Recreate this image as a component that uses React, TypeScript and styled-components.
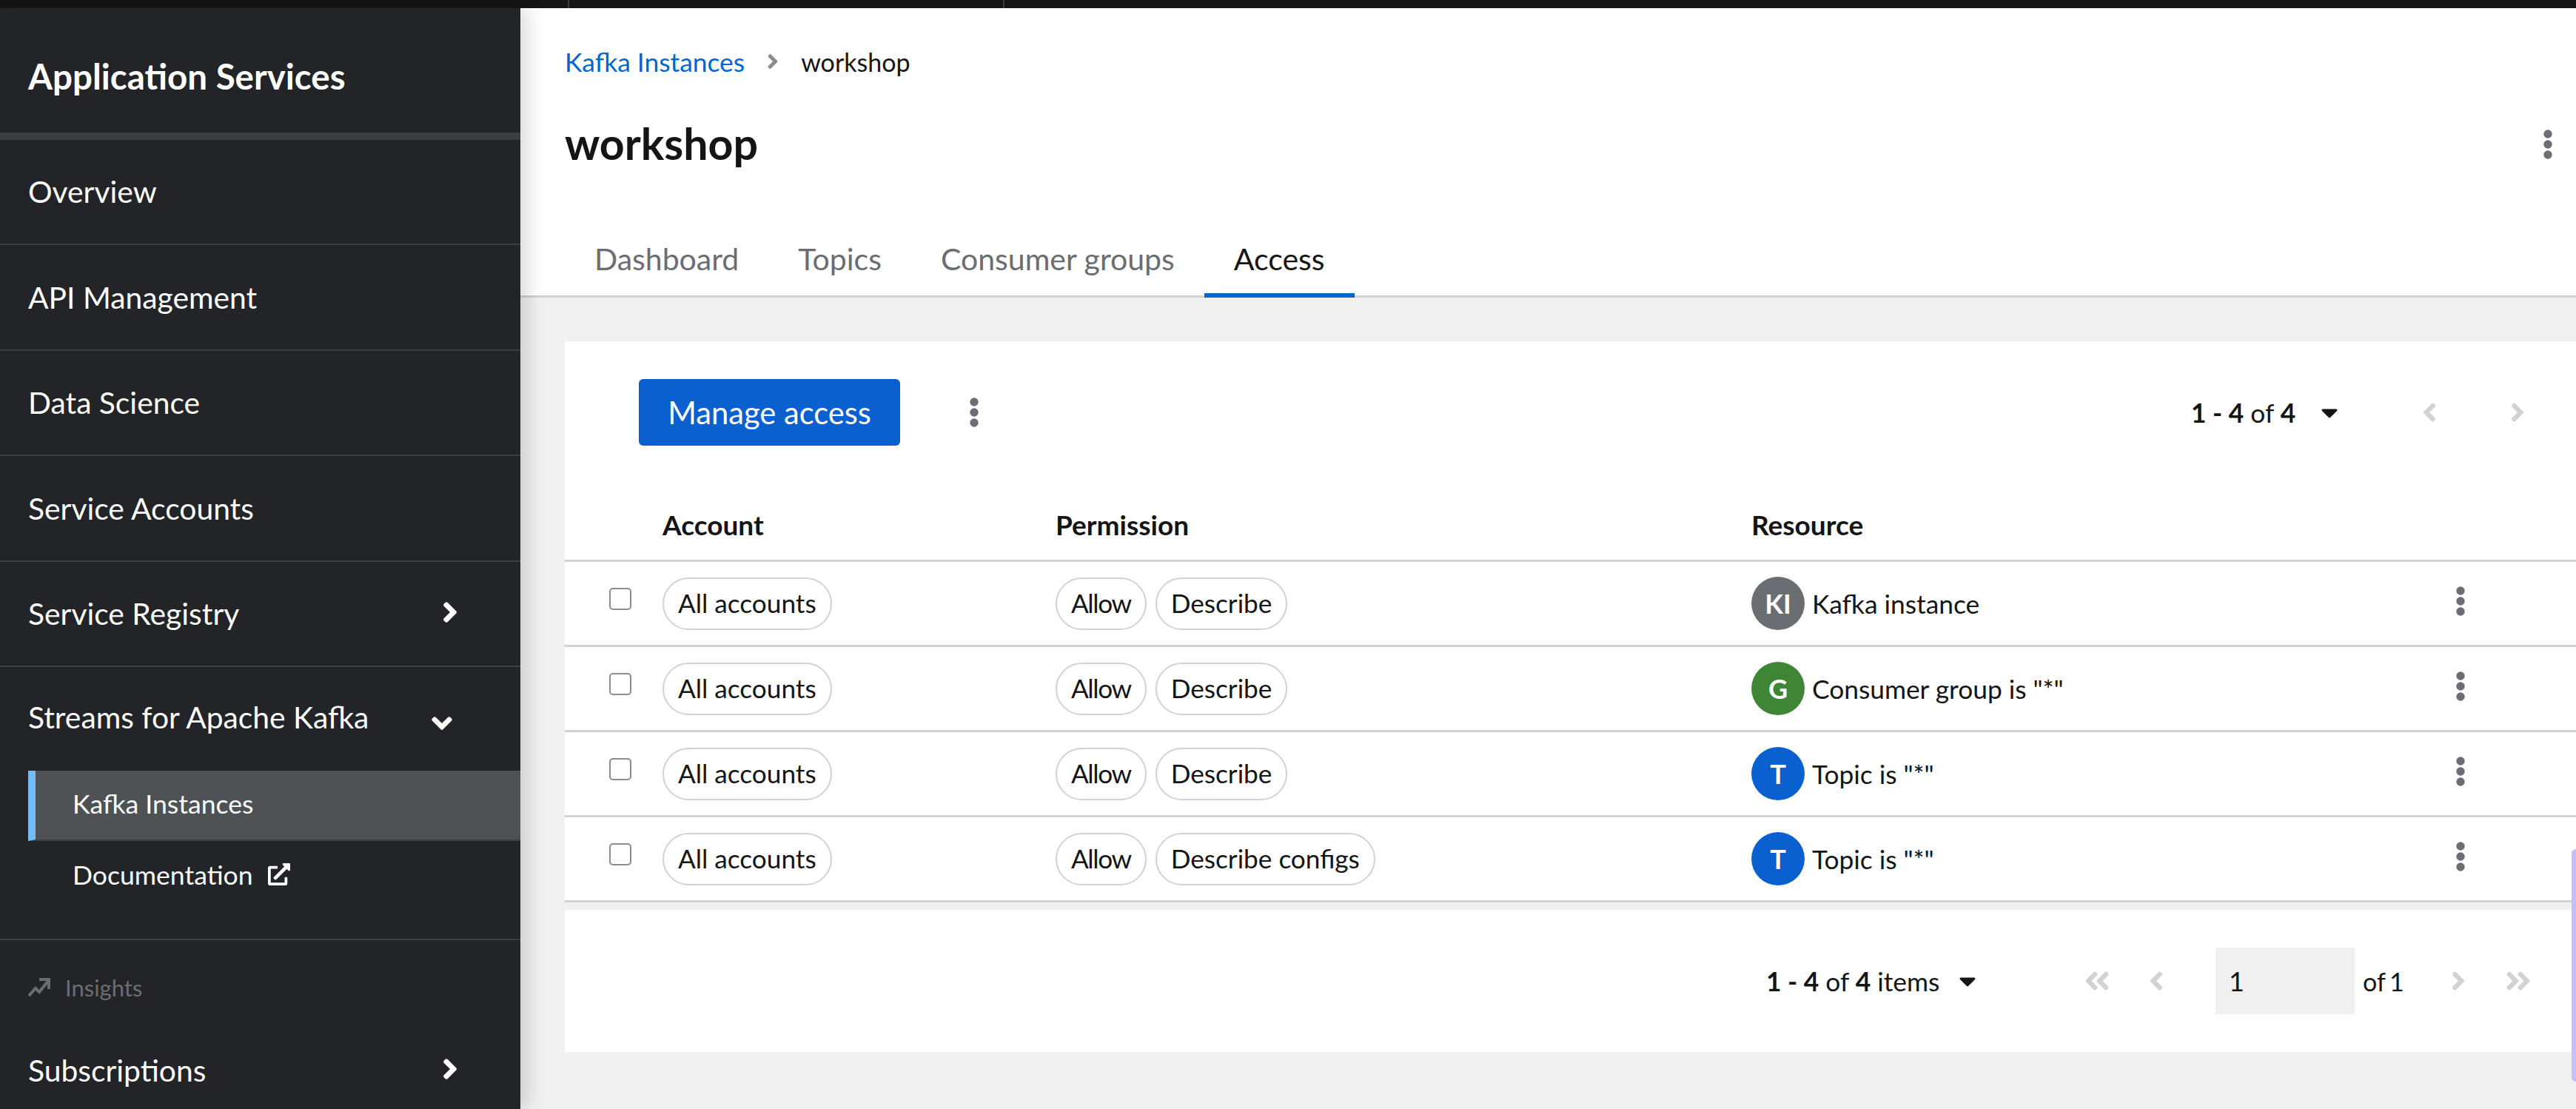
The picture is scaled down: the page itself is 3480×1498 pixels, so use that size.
import React from 'react';
import styled, { createGlobalStyle } from 'styled-components';
import { FaAngleRight, FaAngleDown, FaAngleLeft, FaAngleDoubleLeft, FaAngleDoubleRight, FaCaretDown, FaExternalLinkAlt } from 'react-icons/fa';

const Global = createGlobalStyle`
  html, body { margin: 0; padding: 0; background: #f0f0f0; }
  body { font-family: Lato, "Open Sans", sans-serif; color: #151515; }
  * { box-sizing: border-box; }
`;

const Page = styled.div`
  width: 3480px; height: 1498px; overflow: hidden; display: flex; flex-direction: column; background: #f0f0f0;
`;
const TopBar = styled.div`
  height: 11px; flex: none; background: #151515; display: flex;
`;
const TopSegment = styled.div<{ $w: number }>`
  width: ${p => p.$w}px; height: 11px; border-right: 2px solid #3c3f42;
`;
const Body = styled.div`
  flex: 1; display: flex; min-height: 0;
`;
const Sidebar = styled.nav`
  width: 703px; flex: none; background: #222428; color: #fff; display: flex; flex-direction: column;
  box-shadow: 10px 0 22px rgba(0, 0, 0, 0.14); z-index: 2;
`;
const Brand = styled.div`
  height: 177.5px; flex: none; display: flex; align-items: center; padding: 16px 38px 0;
  border-bottom: 10px solid #3c3f42; font-size: 47.5px; font-weight: 700;
`;
const NavRow = styled.div<{ $h?: number; $last?: boolean }>`
  height: ${p => p.$h ?? 142.5}px; flex: none; display: flex; align-items: center; justify-content: space-between;
  padding: 0 73px 0 38px; font-size: 40.8px; border-bottom: ${p => (p.$last ? 0 : 2)}px solid #3c3f42;
  svg { font-size: 44px; margin-top: -3px; }
`;
const GroupRow = styled(NavRow)`
  border-bottom: 0; height: 140px; padding-right: 84px; padding-bottom: 5px;
  svg { margin-top: 16px; }
`;
const SubNav = styled.div`
  height: 229px; flex: none; border-bottom: 2px solid #3c3f42;
`;
const SubItem = styled.div<{ $active?: boolean }>`
  height: ${p => (p.$active ? 95 : 94)}px; margin-left: 38px; display: flex; align-items: center; gap: 20px;
  padding-left: ${p => (p.$active ? 50 : 60)}px; padding-bottom: 4px; font-size: 35.6px;
  ${p => p.$active && 'background: #4f5255; border-left: 10px solid #73bcf7; border-bottom: 2px solid #3c3f42;'}
  svg { font-size: 30px; }
`;
const SectionLabel = styled.div`
  height: 127px; flex: none; display: flex; align-items: center; gap: 20px; padding-left: 38px;
  font-size: 31px; color: #6a6e73;
`;
const Main = styled.main`
  flex: 1; min-width: 0; display: flex; flex-direction: column;
`;
const Header = styled.header`
  height: 391px; flex: none; background: #fff; display: flex; flex-direction: column; padding-top: 48px;
`;
const Breadcrumb = styled.div`
  display: flex; align-items: center; height: 48px; padding-left: 60px; font-size: 34px; gap: 22px;
  svg { color: #8a8d90; font-size: 32px; }
`;
const Crumb = styled.a`
  color: #06c; font-size: 35.4px;
`;
const TitleRow = styled.div`
  display: flex; align-items: center; justify-content: space-between; height: 70px; margin-top: 53px;
  padding: 0 32px 0 60px;
`;
const Title = styled.h1`
  margin: -4px 0 0; font-size: 59px; font-weight: 700; color: #151515;
`;
const Tabs = styled.div`
  margin-top: auto; height: 98px; display: flex; padding-left: 60px; border-bottom: 3px solid #d2d2d2;
`;
const Tab = styled.div<{ $active?: boolean }>`
  position: relative; display: flex; align-items: center; padding: 0 40px 4px; font-size: 41px;
  color: ${p => (p.$active ? '#151515' : '#6a6e73')};
  ${p => p.$active && `&::after { content: ''; position: absolute; left: 0; right: 0; bottom: -3px; height: 6px; background: #06c; }`}
`;
const Content = styled.div`
  flex: 1; padding: 59px 0 0 60px; position: relative;
`;
const Card = styled.section`
  background: #fff;
`;
const Toolbar = styled.div`
  height: 192px; display: flex; align-items: center; justify-content: space-between; padding: 0 39px 0 100px;
`;
const ToolGroup = styled.div`
  display: flex; align-items: center;
`;
const PrimaryButton = styled.button`
  width: 353px; height: 90px; border: 0; border-radius: 6px; background: #0a60cf; color: #fff;
  font: 400 41.7px Lato, sans-serif; padding: 0;
`;
const KebabWrap = styled.span<{ $ml?: number }>`
  display: inline-flex; margin-left: ${p => p.$ml ?? 0}px;
`;
const Pager = styled.div`
  display: flex; align-items: center;
`;
const PerPage = styled.div<{ $w: number; $gap: number }>`
  width: ${p => p.$w}px; display: flex; align-items: center; gap: ${p => p.$gap}px; font-size: 35.3px;
  svg { font-size: 36px; }
`;
const Strong = styled.b`
  font-weight: 700;
`;
const PageButton = styled.span<{ $ml?: number }>`
  width: 80px; display: flex; justify-content: center; color: #d2d2d2; font-size: 40px; margin-left: ${p => p.$ml ?? 0}px;
`;
const Row = styled.div<{ $head?: boolean }>`
  display: grid; grid-template-columns: 132px 531px 940px 952px 1fr; align-items: center;
  height: ${p => (p.$head ? 106 : 115)}px; border-bottom: 3px solid #d2d2d2;
  ${p => p.$head && 'font-size: 37px; font-weight: 700; padding-top: 8px;'}
`;
const CheckCell = styled.div`
  display: flex; padding-left: 60px; margin-top: -12px;
`;
const Check = styled.span`
  width: 30px; height: 30px; border: 2px solid #8a8d90; border-radius: 5px; background: #fff;
`;
const Chips = styled.div`
  display: flex; gap: 12px;
`;
const Chip = styled.span<{ $tight?: boolean }>`
  height: 71px; display: inline-flex; align-items: center; padding: 0 19px 2px; font-size: 35.2px;
  border: 2px solid #d2d2d2; border-radius: 36px; background: #fff;
  letter-spacing: ${p => (p.$tight ? '-1.4px' : '0')};
`;
const ResourceCell = styled.div`
  display: flex; align-items: center; gap: 10px; font-size: 35.3px;
`;
const Avatar = styled.span<{ $c: string }>`
  width: 72px; height: 72px; border-radius: 50%; background: ${p => p.$c}; color: #fff; display: flex;
  align-items: center; justify-content: center; font-weight: 700; font-size: 36px;
`;
const RowAction = styled.div`
  display: flex; margin-top: -6px;
`;
const Footer = styled.div`
  margin-top: 10px; height: 192px; background: #fff; display: flex; align-items: center; justify-content: flex-end; padding-right: 38px;
`;
const PageInput = styled.div`
  width: 188px; height: 90px; background: #f0f0f0; margin-left: 40px; padding: 0 18px; display: flex; align-items: center; font-size: 36px;
`;
const OfText = styled.span`
  margin-left: 11px; font-size: 34px; word-spacing: -3px; width: 49px; white-space: nowrap;
`;
const ScrollThumb = styled.div`
  position: absolute; right: 0; top: 1147px; width: 6px; height: 314px; background: #c5bff5; border-radius: 6px 0 0 6px; z-index: 3;
`;

const Kebab = () => (
  <svg width="12" height="40" viewBox="0 0 12 40" fill="#6a6e73">
    <circle cx="6" cy="6" r="5.7" /><circle cx="6" cy="20" r="5.7" /><circle cx="6" cy="34" r="5.7" />
  </svg>
);
const Trend = () => (
  <svg width="30" height="26" viewBox="0 0 30 26" fill="none" stroke="#6a6e73" strokeWidth="4">
    <path d="M1 24 L10 14 L15 19 L27 4" /><path d="M15 2 H28 V15" />
  </svg>
);

const rows = [
  { perm: 'Describe', c: '#6a6e73', a: 'KI', r: 'Kafka instance' },
  { perm: 'Describe', c: '#3e8635', a: 'G', r: 'Consumer group is "*"' },
  { perm: 'Describe', c: '#0a60cf', a: 'T', r: 'Topic is "*"' },
  { perm: 'Describe configs', c: '#0a60cf', a: 'T', r: 'Topic is "*"' },
];

export default function App() {
  return (
    <Page>
      <Global />
      <TopBar><TopSegment $w={769} /><TopSegment $w={588} /></TopBar>
      <Body>
        <Sidebar>
          <Brand>Application Services</Brand>
          <NavRow>Overview</NavRow>
          <NavRow>API Management</NavRow>
          <NavRow>Data Science</NavRow>
          <NavRow>Service Accounts</NavRow>
          <NavRow>Service Registry<FaAngleRight /></NavRow>
          <GroupRow>Streams for Apache Kafka<FaAngleDown /></GroupRow>
          <SubNav>
            <SubItem $active>Kafka Instances</SubItem>
            <SubItem>Documentation<FaExternalLinkAlt /></SubItem>
          </SubNav>
          <SectionLabel><Trend />Insights</SectionLabel>
          <NavRow $h={96} $last>Subscriptions<FaAngleRight /></NavRow>
        </Sidebar>
        <Main>
          <Header>
            <Breadcrumb><Crumb>Kafka Instances</Crumb><FaAngleRight /><span>workshop</span></Breadcrumb>
            <TitleRow><Title>workshop</Title><Kebab /></TitleRow>
            <Tabs>
              <Tab>Dashboard</Tab>
              <Tab>Topics</Tab>
              <Tab>Consumer groups</Tab>
              <Tab $active>Access</Tab>
            </Tabs>
          </Header>
          <Content>
            <Card>
              <Toolbar>
                <ToolGroup>
                  <PrimaryButton>Manage access</PrimaryButton>
                  <KebabWrap $ml={94}><Kebab /></KebabWrap>
                </ToolGroup>
                <Pager>
                  <PerPage $w={282} $gap={28}><span><Strong>1 - 4</Strong> of <Strong>4</Strong></span><FaCaretDown /></PerPage>
                  <PageButton><FaAngleLeft /></PageButton>
                  <PageButton $ml={39}><FaAngleRight /></PageButton>
                </Pager>
              </Toolbar>
              <Row $head>
                <span />
                <span>Account</span>
                <span>Permission</span>
                <span>Resource</span>
                <span />
              </Row>
              {rows.map((r, i) => (
                <Row key={i}>
                  <CheckCell><Check /></CheckCell>
                  <Chips><Chip>All accounts</Chip></Chips>
                  <Chips><Chip $tight>Allow</Chip><Chip>{r.perm}</Chip></Chips>
                  <ResourceCell><Avatar $c={r.c}>{r.a}</Avatar>{r.r}</ResourceCell>
                  <RowAction><Kebab /></RowAction>
                </Row>
              ))}
            </Card>
            <Footer>
              <Pager>
                <PerPage $w={407} $gap={20}><span><Strong>1 - 4</Strong> of <Strong>4</Strong> items</span><FaCaretDown /></PerPage>
                <PageButton><FaAngleDoubleLeft /></PageButton>
                <PageButton><FaAngleLeft /></PageButton>
                <PageInput>1</PageInput>
                <OfText>of 1</OfText>
                <PageButton $ml={40}><FaAngleRight /></PageButton>
                <PageButton $ml={1}><FaAngleDoubleRight /></PageButton>
              </Pager>
            </Footer>
          </Content>
        </Main>
      </Body>
      <ScrollThumb />
    </Page>
  );
}
